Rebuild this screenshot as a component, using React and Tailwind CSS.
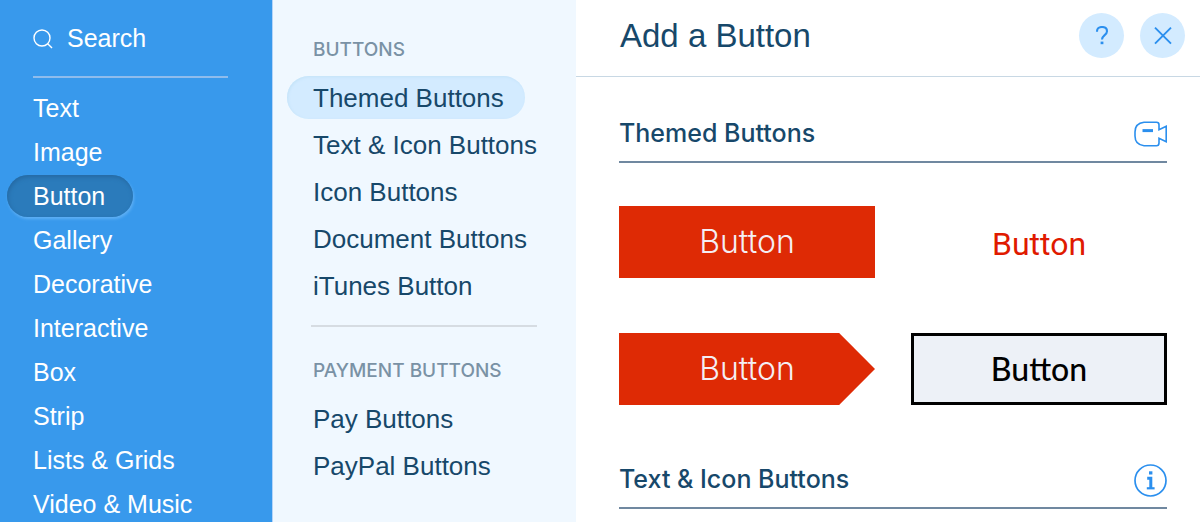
import clsx from "clsx";

const categories = [
  "Text",
  "Image",
  "Button",
  "Gallery",
  "Decorative",
  "Interactive",
  "Box",
  "Strip",
  "Lists & Grids",
  "Video & Music",
];

const buttonLinks = ["Themed Buttons", "Text & Icon Buttons", "Icon Buttons", "Document Buttons", "iTunes Button"];
const paymentLinks = ["Pay Buttons", "PayPal Buttons"];

const CategoryNav = ({ active }) => {
  return (
    <nav className="w-[273px] shrink-0 bg-[#3899ec] border-r border-[#b4d4f8] text-white text-[25px]">
      <label className="flex items-center gap-[14px] h-[78px] pt-[2px] ml-[33px] mr-11 border-b-2 border-[#8fbcec]">
        <SearchIcon />
        <input
          type="text"
          aria-label="Search"
          placeholder="Search"
          className="w-full min-w-0 bg-transparent outline-none placeholder:text-white"
        />
      </label>
      <ul className="flex flex-col gap-[2px] pt-[9px] pl-[7px]">
        {categories.map((name) => (
          <li key={name} className="flex">
            <a
              href="#"
              className={clsx(
                "h-[42px] pl-[26px] pr-7 leading-[42px] rounded-full whitespace-nowrap",
                name === active &&
                  "bg-[#2b7bbb] shadow-[inset_1px_2px_4px_#2569a3,1px_2px_3px_#5fb0f5]"
              )}
            >
              {name}
            </a>
          </li>
        ))}
      </ul>
    </nav>
  );
};

const LinkGroup = ({ title, links, active }) => {
  return (
    <section>
      <h2 className="pl-[26px] font-[Inter] font-medium text-[19px] leading-7 text-[#7a92a5]">{title}</h2>
      <ul className="flex flex-col gap-1 pt-3">
        {links.map((name) => (
          <li key={name} className="flex">
            <a
              href="#"
              className={clsx(
                "h-[43px] pl-[26px] pr-[21px] leading-[45px] rounded-full whitespace-nowrap",
                name === active && "bg-[#d3ebff] shadow-[inset_1px_1px_3px_#c4e3f8]"
              )}
            >
              {name}
            </a>
          </li>
        ))}
      </ul>
    </section>
  );
};

const SectionTitle = ({ title, children }) => {
  return (
    <div className="flex items-center justify-between h-[58px] pt-[2px] border-b-2 border-[#7088a0]">
      <h2 className="font-[Inter] font-medium text-[25px]">{title}</h2>
      {children}
    </div>
  );
};

const SearchIcon = () => (
  <svg className="w-5 h-5 shrink-0" viewBox="0 0 20 20" fill="none" stroke="currentColor" strokeWidth="1.4">
    <circle cx="9" cy="9" r="8" />
    <path d="M14.7 14.7 19 19" />
  </svg>
);

const HelpIcon = () => (
  <svg className="w-5 h-5" viewBox="0 0 20 20" fill="none" stroke="currentColor" strokeWidth="2.1">
    <path d="M5 5.8V5.2C5 2.4 7 1 10 1S15 2.6 15 5.2C15 9.2 10 9 10 13.6" />
    <path d="M10 15.6V18.2" strokeWidth="2.8" />
  </svg>
);

const CloseIcon = () => (
  <svg className="w-5 h-5" viewBox="0 0 20 20" fill="none" stroke="currentColor" strokeWidth="1.9">
    <path d="M2 1.7 18 17.7M18 1.7 2 17.7" />
  </svg>
);

const VideoIcon = () => (
  <svg className="w-[33px] h-[26px]" viewBox="0 0 33 26" fill="none" stroke="currentColor" strokeWidth="1.6">
    <path d="M10 1.3H22.5Q25 1.3 25 3.8V8.8L32.2 5.2V20.8L25 17.2V22Q25 24.7 22.5 24.7H10Q1 23.7 1 15V11Q1 2.3 10 1.3Z" />
    <path d="M8.5 9.6H19" strokeWidth="3" />
  </svg>
);

const InfoIcon = () => (
  <svg className="w-[33px] h-[33px]" viewBox="0 0 33 33" fill="none" stroke="currentColor">
    <circle cx="16.5" cy="16.5" r="15.5" strokeWidth="1.7" />
    <path d="M15 8.9H18.4" strokeWidth="3.2" />
    <path d="M13.2 14.2H16.8V24" strokeWidth="3" />
    <path d="M12.8 24.3H20.6" strokeWidth="2.2" />
  </svg>
);

const App = () => {
  return (
    <div className="flex h-screen overflow-hidden bg-white font-['Liberation_Sans',Arial,sans-serif] text-[#17486a]">
      <CategoryNav active="Button" />

      <aside className="w-[303px] shrink-0 bg-[#f0f8ff] pt-9 pl-[14px] text-[26px]">
        <LinkGroup title="BUTTONS" links={buttonLinks} active="Themed Buttons" />
        <hr className="mt-[18px] mb-[30px] ml-6 mr-[39px] border-t-2 border-[#d6dce2]" />
        <LinkGroup title="PAYMENT BUTTONS" links={paymentLinks} />
      </aside>

      <main className="flex-1 min-w-0">
        <header className="flex items-center justify-between h-[77px] pl-11 pr-[15px] pb-[5px] border-b border-[#c8d8e4]">
          <h1 className="text-[33px]">Add a Button</h1>
          <div className="flex gap-4 text-[#2b8fee]">
            <button aria-label="Help" className="grid place-items-center w-[45px] h-[45px] rounded-full bg-[#d3ebff]">
              <HelpIcon />
            </button>
            <button aria-label="Close" className="grid place-items-center w-[45px] h-[45px] rounded-full bg-[#d3ebff]">
              <CloseIcon />
            </button>
          </div>
        </header>

        <div className="pl-[43px] pr-[33px] pt-7">
          <SectionTitle title="Themed Buttons">
            <a href="#" aria-label="Watch video" className="text-[#2b8fee]">
              <VideoIcon />
            </a>
          </SectionTitle>
          <div className="grid grid-cols-2 gap-x-9 gap-y-[55px] pt-[43px] pb-[46px] font-[Inter] text-[32px]">
            <button className="h-[72px] bg-[#de2a05] font-light text-[#f4eef4]">Button</button>
            <button className="h-[72px] pt-1 font-[Roboto] text-[#e01a00]">Button</button>
            <button className="h-[72px] bg-[#de2a05] font-light text-[#f4eef4] [clip-path:polygon(0_0,86%_0,100%_50%,86%_100%,0_100%)]">
              Button
            </button>
            <button className="h-[72px] border-3 border-black bg-[#edf1f7] font-[Lato] font-medium text-black">
              Button
            </button>
          </div>
          <SectionTitle title="Text & Icon Buttons">
            <a href="#" aria-label="More info" className="text-[#2b8fee]">
              <InfoIcon />
            </a>
          </SectionTitle>
        </div>
      </main>
    </div>
  );
};

export default App;
